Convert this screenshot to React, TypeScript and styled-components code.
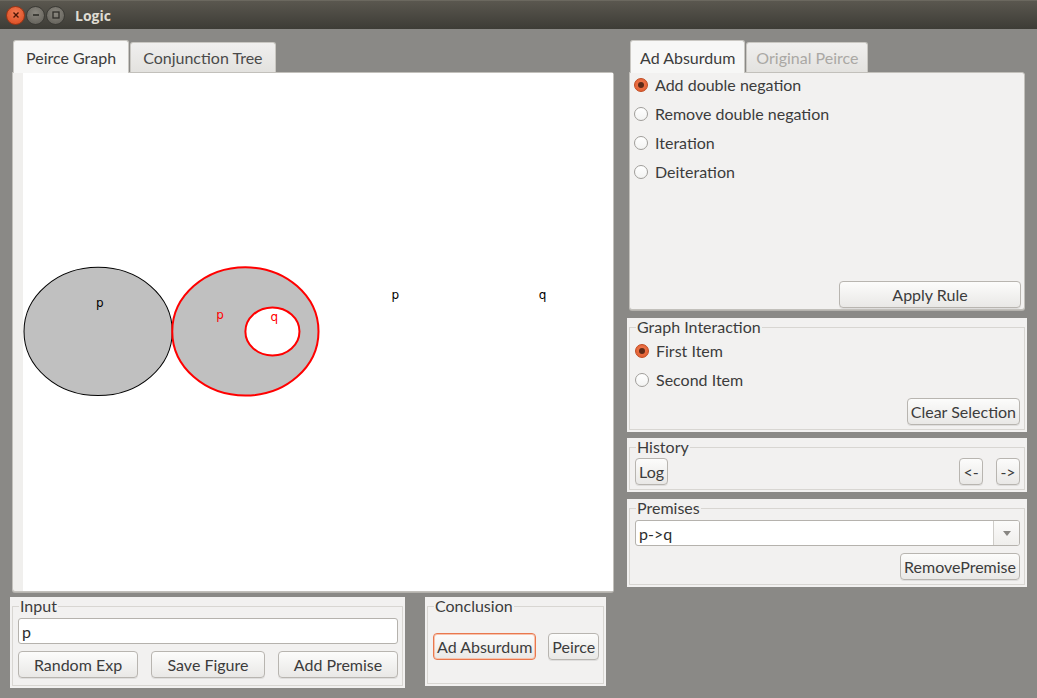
import React from "react";
import styled, { createGlobalStyle, css } from "styled-components";

const Global = createGlobalStyle`
  html, body { margin: 0; padding: 0; background: #8a8986; }
  body { font-family: Lato, "Open Sans", sans-serif; }
  * { box-sizing: border-box; }
`;

const Window = styled.div`
  width: 1037px;
  height: 698px;
  background: #8a8986;
  display: flex;
  flex-direction: column;
  overflow: hidden;
`;

const TitleBar = styled.div`
  height: 29px;
  flex: none;
  background: linear-gradient(#5a574f, #3d3c36);
  border-top: 1px solid #6b685f;
  display: flex;
  align-items: center;
  padding-left: 6px;
  gap: 1px;
`;

const WinButton = styled.span<{ $close?: boolean }>`
  width: 19px;
  height: 19px;
  flex: none;
  border-radius: 50%;
  display: flex;
  align-items: center;
  justify-content: center;
  background: ${(p) =>
    p.$close
      ? "radial-gradient(circle at 50% 35%, #f27a52, #d8471c)"
      : "radial-gradient(circle at 50% 35%, #8a877f, #5e5c55)"};
  border: 1px solid ${(p) => (p.$close ? "#9e3414" : "#3b3a35")};
`;

const Title = styled.span`
  margin-left: 9px;
  color: #dfdbd2;
  font-weight: 700;
  font-size: 14px;
  font-family: "Open Sans", Lato, sans-serif;
`;

const Body = styled.div`
  flex: 1;
  display: flex;
  padding: 11px 10px 0 10px;
  gap: 11px;
`;

const LeftCol = styled.div`
  width: 606px;
  display: flex;
  flex-direction: column;
  gap: 7px;
`;

const RightCol = styled.div`
  width: 400px;
  display: flex;
  flex-direction: column;
`;

const TabPane = styled.div<{ $h: number; $mx: number }>`
  height: ${(p) => p.$h}px;
  margin: 0 ${(p) => p.$mx}px;
  display: flex;
  flex-direction: column;
`;

const TabRow = styled.div`
  height: 32px;
  flex: none;
  display: flex;
  align-items: flex-end;
  padding-left: 1px;
  gap: 1px;
`;

const Tab = styled.div<{ $active?: boolean; $disabled?: boolean; $pad: number }>`
  height: 30px;
  padding: 0 ${(p) => p.$pad}px;
  display: flex;
  align-items: center;
  font-size: 16px;
  border: 1px solid #c9c7c2;
  border-bottom: none;
  border-radius: 3px 3px 0 0;
  position: relative;
  ${(p) =>
    p.$active
      ? css`
          background: #f7f7f6;
          color: #3c3c3c;
          margin-bottom: -1px;
          height: 33px;
          z-index: 1;
        `
      : css`
          background: linear-gradient(#f0efee, #e3e2df);
          color: ${p.$disabled ? "#aaa8a4" : "#4a4a4a"};
        `}
`;

const TabContent = styled.div<{ $canvas?: boolean }>`
  flex: 1;
  border: 1px solid #c2c0bb;
  border-radius: 0 3px 3px 3px;
  background: ${(p) => (p.$canvas ? "#f0efed" : "#f2f1f0")};
  display: flex;
  flex-direction: column;
  box-shadow: 0 1px 0 #b5b3ae;
`;

const Canvas = styled.div`
  flex: 1;
  margin-left: 10px;
  background: #ffffff;
  position: relative;
`;

const RulesBody = styled.div`
  flex: 1;
  display: flex;
  flex-direction: column;
  padding: 0 3px 1px 4px;
`;

const RadioList = styled.div`
  flex: 1;
  display: flex;
  flex-direction: column;
  margin-top: -3px;
`;

const RadioRow = styled.label`
  height: 29px;
  display: flex;
  align-items: center;
  gap: 7px;
  font-size: 16px;
  color: #3c3c3c;
`;

const RadioDot = styled.span<{ $on?: boolean }>`
  width: 14px;
  height: 14px;
  border-radius: 50%;
  flex: none;
  display: flex;
  align-items: center;
  justify-content: center;
  ${(p) =>
    p.$on
      ? css`
          background: radial-gradient(circle at 50% 40%, #f07a50, #e05a2c);
          border: 1px solid #c04a20;
          &::after {
            content: "";
            width: 6px;
            height: 6px;
            border-radius: 50%;
            background: #5e2a18;
          }
        `
      : css`
          background: linear-gradient(#ffffff, #f3f3f2);
          border: 1px solid #a09e9a;
        `}
`;

const Button = styled.button<{ $w?: number; $focus?: boolean }>`
  height: 27px;
  ${(p) => (p.$w ? `width: ${p.$w}px;` : "")}
  padding: 0 3px;
  white-space: nowrap;
  font-family: Lato, "Open Sans", sans-serif;
  font-size: 16px;
  color: #3c3c3c;
  background: linear-gradient(#fcfcfb, #e9e8e6);
  border: 1px solid ${(p) => (p.$focus ? "#e9784e" : "#b8b5b0")};
  border-radius: 4px;
  box-shadow: ${(p) => (p.$focus ? "inset 0 0 0 1px #f7c3ad" : "0 1px 0 rgba(0,0,0,0.08)")};
  flex: none;
`;

const RightAlign = styled.div`
  display: flex;
  justify-content: flex-end;
  gap: 13px;
`;

const Panel = styled.div<{ $h: number; $mt: number; $w?: number }>`
  height: ${(p) => p.$h}px;
  margin-top: ${(p) => p.$mt}px;
  ${(p) => (p.$w ? `width: ${p.$w}px;` : "")}
  background: #f2f1f0;
  padding: 0 2px 2px 2px;
  display: flex;
  flex: none;
`;

const Fieldset = styled.fieldset`
  flex: 1;
  margin: 0;
  border: 1px solid #d8d6d2;
  padding: 0 4px 4px 5px;
  min-width: 0;
  display: flex;
  flex-direction: column;
`;

const Legend = styled.legend`
  font-size: 16px;
  color: #3c3c3c;
  padding: 0 1px;
  margin-left: 1px;
  line-height: 18px;
`;

const Spacer = styled.div`
  flex: 1;
`;

const HistoryRow = styled.div`
  display: flex;
  align-items: center;
  margin-top: 2px;
`;

const Combo = styled.div`
  height: 26px;
  margin-top: 3px;
  display: flex;
  background: #ffffff;
  border: 1px solid #b5b2ad;
  border-radius: 3px;
  overflow: hidden;
`;

const ComboText = styled.div`
  flex: 1;
  padding-left: 3px;
  display: flex;
  align-items: center;
  font-size: 16px;
  color: #2c2c2c;
`;

const ComboArrow = styled.div`
  width: 26px;
  border-left: 1px solid #cfcdc9;
  background: linear-gradient(#fbfbfa, #efeeec);
  display: flex;
  align-items: center;
  justify-content: center;
  &::after {
    content: "";
    border-left: 4px solid transparent;
    border-right: 4px solid transparent;
    border-top: 5px solid #888682;
  }
`;

const TextField = styled.div`
  height: 26px;
  margin-top: 3px;
  background: #ffffff;
  border: 1px solid #b5b2ad;
  border-radius: 3px;
  padding-left: 3px;
  display: flex;
  align-items: center;
  font-size: 16px;
  color: #2c2c2c;
`;

const BottomRow = styled.div`
  display: flex;
  gap: 20px;
`;

const InputButtons = styled.div`
  display: flex;
  justify-content: space-between;
  margin-top: 7px;
`;

const ConclusionButtons = styled.div`
  display: flex;
  gap: 12px;
  margin-top: 18px;
`;

const GraphSvg = styled.svg`
  display: block;
  width: 100%;
  height: 100%;
`;

function Radio({ label, on }: { label: string; on?: boolean }) {
  return (
    <RadioRow>
      <RadioDot $on={on} />
      {label}
    </RadioRow>
  );
}

export default function App() {
  return (
    <>
      <Global />
      <Window>
        <TitleBar>
          <WinButton $close>
            <svg width="8" height="8" viewBox="0 0 8 8">
              <path d="M1.5 1.5 L6.5 6.5 M6.5 1.5 L1.5 6.5" stroke="#4a1606" strokeWidth="1.4" />
            </svg>
          </WinButton>
          <WinButton>
            <svg width="8" height="8" viewBox="0 0 8 8">
              <path d="M1 4 H7" stroke="#2e2d29" strokeWidth="1.6" />
            </svg>
          </WinButton>
          <WinButton>
            <svg width="8" height="8" viewBox="0 0 8 8">
              <rect x="1" y="1" width="6" height="6" fill="none" stroke="#2e2d29" strokeWidth="1.3" />
            </svg>
          </WinButton>
          <Title>Logic</Title>
        </TitleBar>
        <Body>
          <LeftCol>
            <TabPane $h={550} $mx={2}>
              <TabRow>
                <Tab $active $pad={12}>Peirce Graph</Tab>
                <Tab $pad={12}>Conjunction Tree</Tab>
              </TabRow>
              <TabContent $canvas>
                <Canvas>
                  <GraphSvg viewBox="0 0 589 517">
                    <ellipse cx="75" cy="258" rx="74" ry="64" fill="#c0c0c0" stroke="#000" strokeWidth="1" />
                    <ellipse cx="222" cy="258" rx="73" ry="64" fill="#c0c0c0" stroke="#ff0000" strokeWidth="2" />
                    <ellipse cx="249" cy="258" rx="27" ry="24" fill="#ffffff" stroke="#ff0000" strokeWidth="2" />
                    <g fontFamily="'DejaVu Sans', sans-serif" fontSize="12">
                      <text x="73" y="234" fill="#000">p</text>
                      <text x="193" y="246" fill="#ff0000">p</text>
                      <text x="247" y="248" fill="#ff0000">q</text>
                      <text x="368" y="226" fill="#000">p</text>
                      <text x="515" y="226" fill="#000">q</text>
                    </g>
                  </GraphSvg>
                </Canvas>
              </TabContent>
            </TabPane>
            <BottomRow>
              <Panel $h={91} $mt={0} $w={395}>
                <Fieldset>
                  <Legend>Input</Legend>
                  <TextField>p</TextField>
                  <InputButtons>
                    <Button $w={120}>Random Exp</Button>
                    <Button $w={114}>Save Figure</Button>
                    <Button $w={120}>Add Premise</Button>
                  </InputButtons>
                </Fieldset>
              </Panel>
              <Panel $h={89} $mt={0} $w={181}>
                <Fieldset>
                  <Legend>Conclusion</Legend>
                  <ConclusionButtons>
                    <Button $focus>Ad Absurdum</Button>
                    <Button>Peirce</Button>
                  </ConclusionButtons>
                </Fieldset>
              </Panel>
            </BottomRow>
          </LeftCol>
          <RightCol>
            <TabPane $h={270} $mx={2}>
              <TabRow>
                <Tab $active $pad={9}>Ad Absurdum</Tab>
                <Tab $disabled $pad={9}>Original Peirce</Tab>
              </TabRow>
              <TabContent>
                <RulesBody>
                  <RadioList>
                    <Radio label="Add double negation" on />
                    <Radio label="Remove double negation" />
                    <Radio label="Iteration" />
                    <Radio label="Deiteration" />
                  </RadioList>
                  <RightAlign>
                    <Button $w={182}>Apply Rule</Button>
                  </RightAlign>
                </RulesBody>
              </TabContent>
            </TabPane>
            <Panel $h={114} $mt={8}>
              <Fieldset>
                <Legend>Graph Interaction</Legend>
                <Radio label="First Item" on />
                <Radio label="Second Item" />
                <Spacer />
                <RightAlign>
                  <Button>Clear Selection</Button>
                </RightAlign>
              </Fieldset>
            </Panel>
            <Panel $h={54} $mt={6}>
              <Fieldset>
                <Legend>History</Legend>
                <HistoryRow>
                  <Button>Log</Button>
                  <Spacer />
                  <RightAlign>
                    <Button $w={24}>&lt;-</Button>
                    <Button $w={24}>-&gt;</Button>
                  </RightAlign>
                </HistoryRow>
              </Fieldset>
            </Panel>
            <Panel $h={88} $mt={7}>
              <Fieldset>
                <Legend>Premises</Legend>
                <Combo>
                  <ComboText>p-&gt;q</ComboText>
                  <ComboArrow />
                </Combo>
                <Spacer />
                <RightAlign>
                  <Button>RemovePremise</Button>
                </RightAlign>
              </Fieldset>
            </Panel>
          </RightCol>
        </Body>
      </Window>
    </>
  );
}
